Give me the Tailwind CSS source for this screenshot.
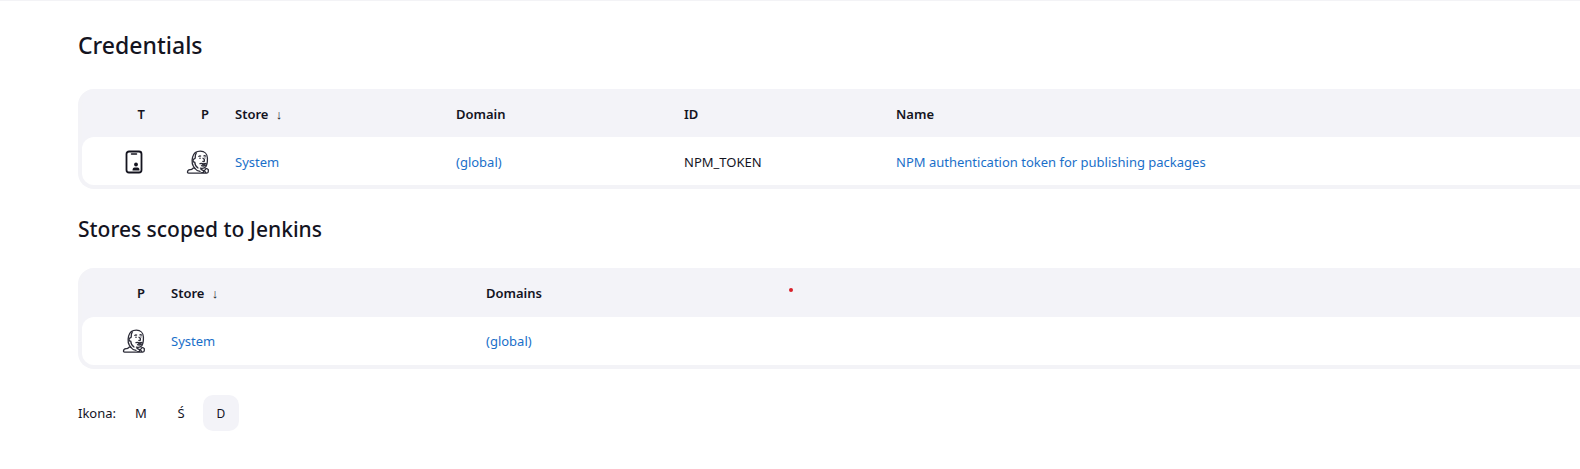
<!DOCTYPE html>
<html lang="pl">
<head>
<meta charset="utf-8">
<title>Credentials</title>
<script src="https://cdn.jsdelivr.net/npm/@tailwindcss/browser@4"></script>
</head>
<body class="bg-white font-['Noto_Sans',sans-serif] text-[13px] text-[#14141f]">
<svg class="hidden" aria-hidden="true">
  <symbol id="jenkins" viewBox="0 0 24 24">
    <g fill="none" stroke="currentColor" stroke-width="1.3" stroke-linecap="round" stroke-linejoin="round">
      <path d="M9 18.500C6.400 15.800 5.600 11 6.600 7.200C7.700 2.900 10.700 1.200 14.400 1.200C18.600 1.200 21.300 4 21.400 8C21.500 11 21.400 14 20 16.400C18.800 18.200 16.500 18.600 14.400 18.200"/>
      <path d="M10.200 3.300C8.700 5.100 9.600 6.300 9.200 8C8.900 9.200 7.700 8.600 7.200 9.700C6.800 11.200 7.400 12.300 8.800 12.200C8.800 14.500 10 16.600 12 18"/>
      <path d="M17 8.200Q19 9.300 18.400 11Q17.900 11.700 16.800 11.400M12.800 6.400Q13.700 5.700 14.600 6.100M18 5.900Q18.800 5.500 19.500 6"/>
      <path d="M14 13.700Q16 13 17.400 13.900Q19 13 20.300 13.700M15.500 15.700Q17.500 16.600 19.400 15.300"/>
      <path d="M8.600 18Q7.400 17.600 6.600 18.700Q5.800 19.800 4 19.600Q1.600 20 1.500 22Q1.400 23.100 2.600 23.100H20.800Q22.300 23 22.300 21.500V19.600Q21.400 18.300 19.800 18.300M9 18.500Q10.500 20.800 14 21.400M15 19.300L17.500 20.600V22.300L15 23M20 18.900L18.300 20.600L20 22.800"/>
    </g>
    <g fill="currentColor"><circle cx="14" cy="8.200" r=".8"/><circle cx="19" cy="7.900" r=".6"/><path d="M15.500 14.300Q17.500 13.700 19.800 14.200L18.800 15.800H16.500Z"/></g>
  </symbol>
</svg>
<main class="relative border-t border-[#f3f3f6] pl-[78px]">
  <h1 class="mt-7 text-[23px] leading-8 font-medium">Credentials</h1>

  <div class="mt-7 rounded-l-2xl border-b-4 border-l-4 border-[#f3f3f7] bg-[#f3f3f8]">
    <table class="w-full table-fixed border-separate border-spacing-0 text-left">
      <colgroup><col class="w-16"><col class="w-16"><col class="w-[221px]"><col class="w-[228px]"><col class="w-[212px]"><col></colgroup>
      <thead>
        <tr class="h-12">
          <th scope="col" class="pt-1 pr-px text-right font-semibold">T</th>
          <th scope="col" class="pt-1 pr-px text-right font-semibold">P</th>
          <th scope="col" class="pt-1 pl-[25px] font-semibold"><button type="button">Store <span class="pl-1">↓</span></button></th>
          <th scope="col" class="pt-1 pl-[25px] font-semibold">Domain</th>
          <th scope="col" class="pt-1 pl-[25px] font-semibold">ID</th>
          <th scope="col" class="pt-1 pl-[25px] font-semibold">Name</th>
        </tr>
      </thead>
      <tbody>
        <tr class="h-12">
          <td class="rounded-l-xl bg-white pt-0.5">
            <svg class="ml-auto size-6" viewBox="0 0 24 24" role="img" aria-label="Secret text" fill="none" stroke="currentColor"><rect x="4.500" y="1.500" width="15" height="21" rx="2.500" stroke-width="1.800"/><path d="M9.500 4H14.500" stroke-width="1.500" stroke-linecap="round"/><circle cx="14" cy="14.500" r="1.900" fill="currentColor" stroke="none"/><path d="M10.500 20.500Q10.500 17.500 12.500 17.500H15.500Q17.500 17.500 17.500 20.500Z" fill="currentColor" stroke="none"/></svg>
          </td>
          <td class="bg-white pt-0.5"><svg class="ml-auto size-6 text-[#2c2c38]" role="img" aria-label="Jenkins"><use href="#jenkins"/></svg></td>
          <td class="bg-white pt-1 pl-[25px]"><a href="#" class="text-[#1a6fc9]">System</a></td>
          <td class="bg-white pt-1 pl-[25px]"><a href="#" class="text-[#1a6fc9]">(global)</a></td>
          <td class="bg-white pt-1 pl-[25px]">NPM_TOKEN</td>
          <td class="bg-white pt-1 pl-[25px]"><a href="#" class="text-[#1a6fc9]">NPM authentication token for publishing packages</a></td>
        </tr>
      </tbody>
    </table>
  </div>

  <h2 class="mt-6 text-[21px] leading-8 font-medium">Stores scoped to Jenkins</h2>

  <div class="mt-[23px] rounded-l-2xl border-b-4 border-l-4 border-[#f3f3f7] bg-[#f3f3f8]">
    <table class="w-full table-fixed border-separate border-spacing-0 text-left">
      <colgroup><col class="w-16"><col class="w-[315px]"><col></colgroup>
      <thead>
        <tr class="h-[49px]">
          <th scope="col" class="pt-0.5 pr-px text-right font-semibold">P</th>
          <th scope="col" class="pt-0.5 pl-[25px] font-semibold"><button type="button">Store <span class="pl-1">↓</span></button></th>
          <th scope="col" class="pt-0.5 pl-[25px] font-semibold">Domains</th>
        </tr>
      </thead>
      <tbody>
        <tr class="h-12">
          <td class="rounded-l-xl bg-white"><svg class="ml-auto size-6 text-[#2c2c38]" role="img" aria-label="Jenkins"><use href="#jenkins"/></svg></td>
          <td class="bg-white pt-0.5 pl-[25px]"><a href="#" class="text-[#1a6fc9]">System</a></td>
          <td class="bg-white pt-0.5 pl-[25px]"><a href="#" class="text-[#1a6fc9]">(global)</a></td>
        </tr>
      </tbody>
    </table>
  </div>

  <div class="mt-[26px] flex items-center">
    <span class="w-[45px] pt-0.5">Ikona:</span>
    <div class="flex gap-1">
      <button type="button" class="size-9 rounded-[10px] pt-0.5">M</button>
      <button type="button" class="size-9 rounded-[10px] pt-0.5">Ś</button>
      <button type="button" class="size-9 rounded-[10px] bg-[#f3f3f8] pt-0.5 text-xs" aria-pressed="true">D</button>
    </div>
  </div>
  <span class="absolute top-[287px] left-[789px] size-1 rounded-full bg-[#d9202a]"></span>
</main>
</body>
</html>
